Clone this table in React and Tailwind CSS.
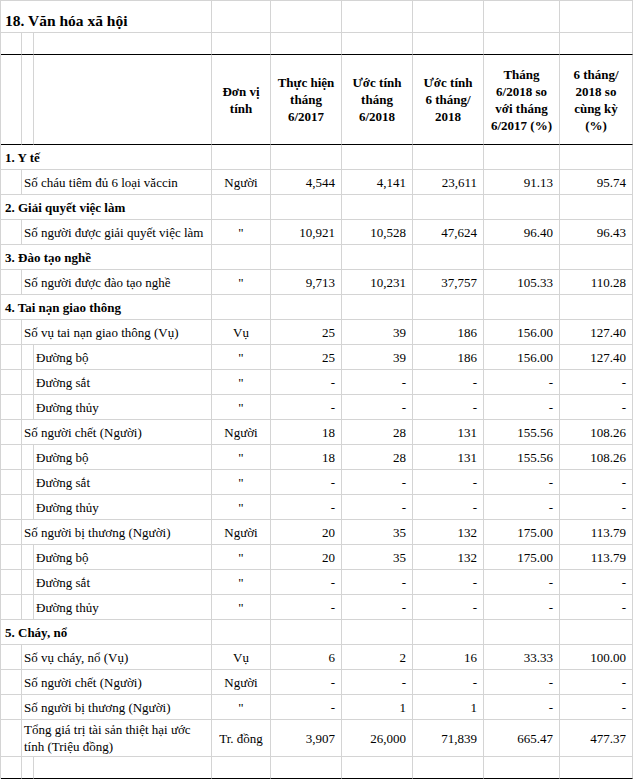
import React from "react";

const cols =
  "grid grid-cols-[21px_12px_178px_59px_71px_71px_71px_76px_73px]";
const cell = "border-r border-b border-[#d4d4d4]";

const rows = [
  { type: "section", label: "1. Y tế" },
  { type: "item", label: "Số cháu tiêm đủ 6 loại văccin", unit: "Người", v: ["4,544", "4,141", "23,611", "91.13", "95.74"] },
  { type: "section", label: "2. Giải quyết việc làm" },
  { type: "item", label: "Số người được giải quyết việc làm", unit: '"', v: ["10,921", "10,528", "47,624", "96.40", "96.43"] },
  { type: "section", label: "3. Đào tạo nghề" },
  { type: "item", label: "Số người được đào tạo nghề", unit: '"', v: ["9,713", "10,231", "37,757", "105.33", "110.28"] },
  { type: "section", label: "4. Tai nạn giao thông" },
  { type: "item", label: "Số vụ tai nạn giao thông (Vụ)", unit: "Vụ", v: ["25", "39", "186", "156.00", "127.40"] },
  { type: "sub", label: "Đường bộ", unit: '"', v: ["25", "39", "186", "156.00", "127.40"] },
  { type: "sub", label: "Đường sắt", unit: '"', v: ["-", "-", "-", "-", "-"] },
  { type: "sub", label: "Đường thủy", unit: '"', v: ["-", "-", "-", "-", "-"] },
  { type: "item", label: "Số người chết (Người)", unit: "Người", v: ["18", "28", "131", "155.56", "108.26"] },
  { type: "sub", label: "Đường bộ", unit: '"', v: ["18", "28", "131", "155.56", "108.26"] },
  { type: "sub", label: "Đường sắt", unit: '"', v: ["-", "-", "-", "-", "-"] },
  { type: "sub", label: "Đường thủy", unit: '"', v: ["-", "-", "-", "-", "-"] },
  { type: "item", label: "Số người bị thương (Người)", unit: "Người", v: ["20", "35", "132", "175.00", "113.79"] },
  { type: "sub", label: "Đường bộ", unit: '"', v: ["20", "35", "132", "175.00", "113.79"] },
  { type: "sub", label: "Đường sắt", unit: '"', v: ["-", "-", "-", "-", "-"] },
  { type: "sub", label: "Đường thủy", unit: '"', v: ["-", "-", "-", "-", "-"] },
  { type: "section", label: "5. Cháy, nổ" },
  { type: "item", label: "Số vụ cháy, nổ (Vụ)", unit: "Vụ", v: ["6", "2", "16", "33.33", "100.00"] },
  { type: "item", label: "Số người chết (Người)", unit: "Người", v: ["-", "-", "-", "-", "-"] },
  { type: "item", label: "Số người bị thương (Người)", unit: '"', v: ["-", "1", "1", "-", "-"] },
];

const headers = [
  ["Đơn vị", "tính"],
  ["Thực hiện", "tháng", "6/2017"],
  ["Ước tính", "tháng", "6/2018"],
  ["Ước tính", "6 tháng/", "2018"],
  ["Tháng", "6/2018 so", "với tháng", "6/2017 (%)"],
  ["6 tháng/", "2018 so", "cùng kỳ", "(%)"],
];

const Values = ({ unit, v }) => (
  <>
    <div className={`${cell} flex items-center justify-center`}>{unit}</div>
    {v.map((x, i) => (
      <div key={i} className={`${cell} flex items-center justify-end pr-[6px]`}>
        {x}
      </div>
    ))}
  </>
);

const Empty = ({ n, extra = "" }) =>
  Array.from({ length: n }).map((_, i) => <div key={i} className={`${cell} ${extra}`} />);

const DataRow = ({ row }) => {
  if (row.type === "section") {
    return (
      <div className={`${cols} h-[25px]`}>
        <div className={`${cell} col-span-3 flex items-center pl-[4px] font-bold`}>{row.label}</div>
        <Empty n={6} />
      </div>
    );
  }
  if (row.type === "item") {
    return (
      <div className={`${cols} h-[25px]`}>
        <div className={cell} />
        <div className={`${cell} col-span-2 flex items-center pl-[2px] whitespace-nowrap`}>{row.label}</div>
        <Values unit={row.unit} v={row.v} />
      </div>
    );
  }
  return (
    <div className={`${cols} h-[25px]`}>
      <div className={cell} />
      <div className={cell} />
      <div className={`${cell} flex items-center pl-[2px]`}>{row.label}</div>
      <Values unit={row.unit} v={row.v} />
    </div>
  );
};

export default function App() {
  return (
    <div className="w-[633px] h-[779px] bg-white text-black font-['Liberation_Serif',serif] text-[13px] leading-[17px] overflow-hidden">
      <div className="border-l border-t border-[#d4d4d4]">
        {/* title */}
        <div className={`${cols} h-[32px]`}>
          <div className={`${cell} col-span-3 flex items-end pl-[4px] pb-[1px] text-[15.5px] leading-[20px] font-bold whitespace-nowrap`}>
            18. Văn hóa xã hội
          </div>
          <Empty n={6} />
        </div>
        <div className={`${cols} h-[22px]`}>
          <Empty n={9} extra="border-b-black" />
        </div>

        {/* header */}
        <div className={`${cols} h-[90px] font-bold`}>
          <Empty n={3} extra="border-b-black" />
          {headers.map((lines, i) => (
            <div key={i} className={`${cell} border-b-black flex flex-col items-center justify-center text-center`}>
              {lines.map((l, j) => (
                <span key={j} className="whitespace-nowrap">{l}</span>
              ))}
            </div>
          ))}
        </div>

        {rows.map((r, i) => (
          <DataRow key={i} row={r} />
        ))}

        {/* total */}
        <div className={`${cols} h-[37px]`}>
          <div className={cell} />
          <div className={`${cell} col-span-2 flex flex-col justify-center pl-[2px]`}>
            <span>Tổng giá trị tài sản thiệt hại ước</span>
            <span>tính (Triệu đồng)</span>
          </div>
          <Values unit="Tr. đồng" v={["3,907", "26,000", "71,839", "665.47", "477.37"]} />
        </div>
        <div className={`${cols} h-[22px]`}>
          <Empty n={9} extra="border-b-black" />
        </div>
      </div>
    </div>
  );
}
